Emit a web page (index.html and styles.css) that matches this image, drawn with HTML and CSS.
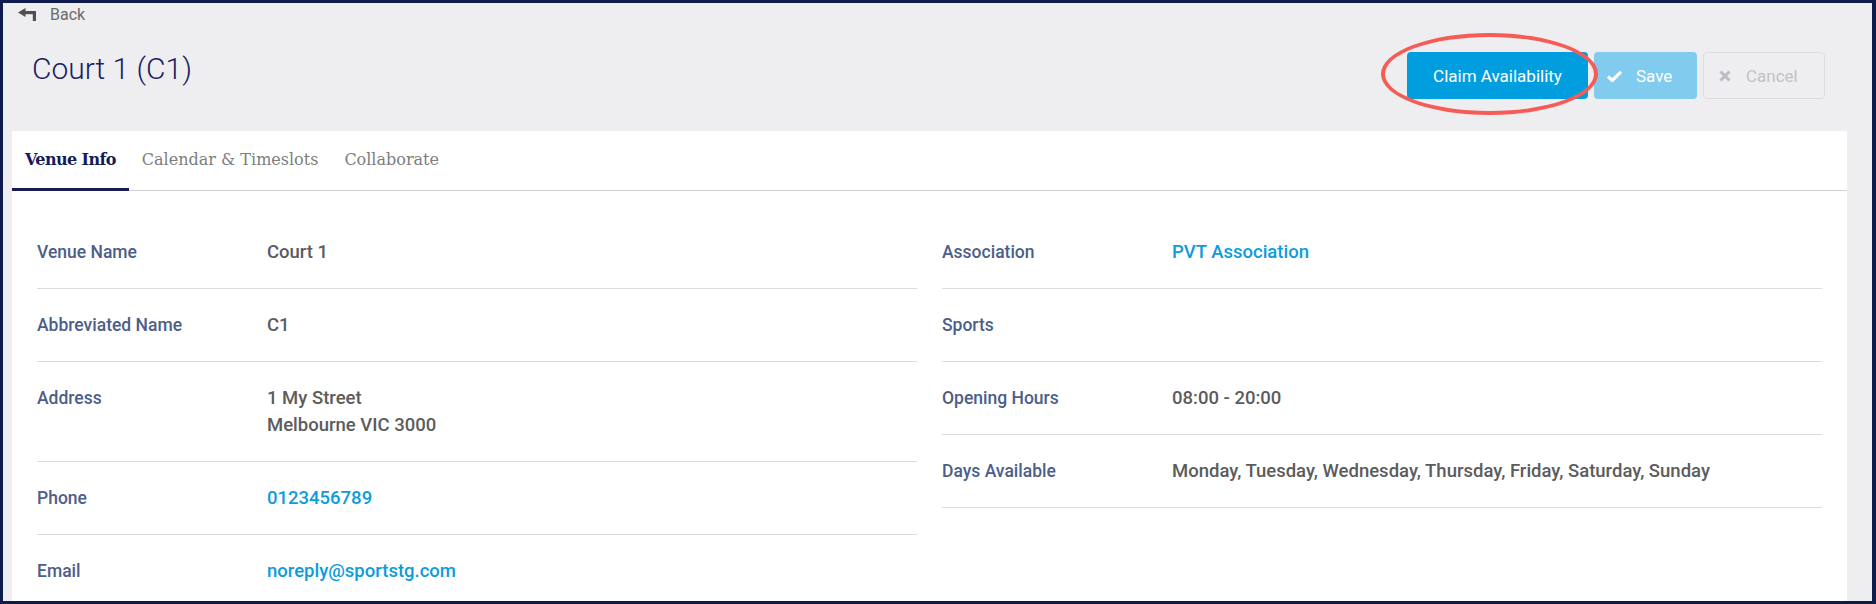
FILE: index.html
```html
<!DOCTYPE html>
<html>
<head>
<meta charset="utf-8">
<link rel="stylesheet" href="styles.css">
</head>
<body>
<div class="frame">
  <div class="back">
    <svg class="back-icon" width="20" height="13" viewBox="0 0 20 13"><polygon points="0,4.5 7.5,0 7.5,9" fill="#505050"/><rect x="5" y="3" width="13" height="3.2" fill="#505050"/><rect x="14.8" y="3" width="3.2" height="10" fill="#505050"/></svg>
    <span class="back-text">Back</span>
  </div>
  <div class="header">
    <h1 class="title">Court 1 (C1)</h1>
    <div class="actions">
      <div class="claim-wrap">
        <button class="btn btn-claim">Claim Availability</button>
        <div class="ring"></div>
      </div>
      <button class="btn btn-save"><svg width="15" height="12" viewBox="0 0 15 12"><path d="M1 6.5 L5.3 10.5 L14 1.8" fill="none" stroke="#fff" stroke-width="3.2" stroke-linejoin="miter"/></svg><span>Save</span></button>
      <button class="btn btn-cancel"><svg width="12" height="12" viewBox="0 0 12 12"><path d="M1.5 1.5 L10.5 10.5 M10.5 1.5 L1.5 10.5" stroke="#bdbdbd" stroke-width="3"/></svg><span>Cancel</span></button>
    </div>
  </div>
  <div class="card">
    <div class="tabs">
      <div class="tab active">Venue Info</div>
      <div class="tab">Calendar &amp; Timeslots</div>
      <div class="tab">Collaborate</div>
    </div>
    <div class="content">
      <div class="col">
        <div class="row"><div class="label">Venue Name</div><div class="value">Court 1</div></div>
        <div class="row"><div class="label">Abbreviated Name</div><div class="value">C1</div></div>
        <div class="row"><div class="label">Address</div><div class="value">1 My Street<br>Melbourne VIC 3000</div></div>
        <div class="row"><div class="label">Phone</div><div class="value link">0123456789</div></div>
        <div class="row"><div class="label">Email</div><div class="value link">noreply@sportstg.com</div></div>
      </div>
      <div class="col">
        <div class="row"><div class="label">Association</div><div class="value link">PVT Association</div></div>
        <div class="row"><div class="label">Sports</div><div class="value"></div></div>
        <div class="row"><div class="label">Opening Hours</div><div class="value">08:00 - 20:00</div></div>
        <div class="row"><div class="label">Days Available</div><div class="value">Monday, Tuesday, Wednesday, Thursday, Friday, Saturday, Sunday</div></div>
      </div>
    </div>
  </div>
</div>
</body>
</html>
```
FILE: styles.css
```css
html, body {
  margin: 0;
  padding: 0;
}
body {
  font-family: Roboto, "Liberation Sans", sans-serif;
}
.frame {
  width: 1876px;
  height: 604px;
  box-sizing: border-box;
  border: 3px solid #0f1b4b;
  border-right-width: 4px;
  background: #eeeef1;
  overflow: hidden;
  display: flex;
  flex-direction: column;
}
.back {
  display: flex;
  align-items: center;
  gap: 12px;
  height: 22px;
  padding-left: 15px;
  flex: none;
}
.back-text {
  font-size: 16px;
  color: #6b6b6b;
}
.header {
  display: flex;
  justify-content: space-between;
  align-items: flex-start;
  height: 106px;
  box-sizing: border-box;
  padding: 24px 47px 0 29px;
  flex: none;
}
.title {
  margin: 0;
  font-size: 30px;
  font-weight: 300;
  line-height: 40px;
  color: #1b2161;
}
.actions {
  display: flex;
  gap: 6px;
  margin-top: 3px;
}
.claim-wrap {
  position: relative;
}
.btn {
  height: 47px;
  box-sizing: border-box;
  border-radius: 4px;
  font-family: Roboto, "Liberation Sans", sans-serif;
  font-size: 17px;
  display: flex;
  align-items: center;
  border: 1px solid transparent;
  cursor: pointer;
}
.btn-claim {
  width: 181px;
  justify-content: center;
  background: #009edf;
  color: #fff;
}
.btn-save {
  width: 103px;
  padding-left: 12px;
  gap: 14px;
  background: #81cbee;
  color: #fff;
}
.btn-cancel {
  width: 122px;
  padding-left: 15px;
  gap: 15px;
  background: transparent;
  border-color: #dcdcdc;
  color: #c2c2c2;
}
.ring {
  position: absolute;
  left: -26px;
  top: -19px;
  width: 217px;
  height: 82px;
  box-sizing: border-box;
  border: 4px solid #f65b55;
  border-radius: 50%;
  pointer-events: none;
}
.card {
  flex: 1;
  margin: 0 25px 0 9px;
  background: #fff;
}
.tabs {
  display: flex;
  height: 60px;
  box-sizing: border-box;
  border-bottom: 1px solid #d2d2d2;
}
.tab {
  display: flex;
  align-items: center;
  padding: 0 13px;
  font-family: "DejaVu Serif", "Liberation Serif", serif;
  font-size: 16px;
  color: #7d7d7d;
  margin-bottom: -1px;
  border-bottom: 3px solid transparent;
}
.tab.active {
  font-weight: bold;
  color: #161b57;
  border-bottom-color: #161b57;
  letter-spacing: -0.6px;
}
.content {
  display: grid;
  grid-template-columns: 1fr 1fr;
  column-gap: 25px;
  padding: 25px 25px 0;
}
.row {
  display: flex;
  align-items: flex-start;
  padding: 23px 0 22px;
  border-bottom: 1px solid #dcdcdc;
  line-height: 27px;
  font-size: 17.5px;
  font-weight: 500;
}
.label {
  width: 230px;
  flex: none;
  color: #4d5e8a;
}
.value {
  color: #5c5c5c;
  font-size: 18.5px;
  min-height: 27px;
}
.value.link {
  color: #0c9cdc;
}
.col .row:last-child:nth-child(5) {
  border-bottom: none;
}
```
